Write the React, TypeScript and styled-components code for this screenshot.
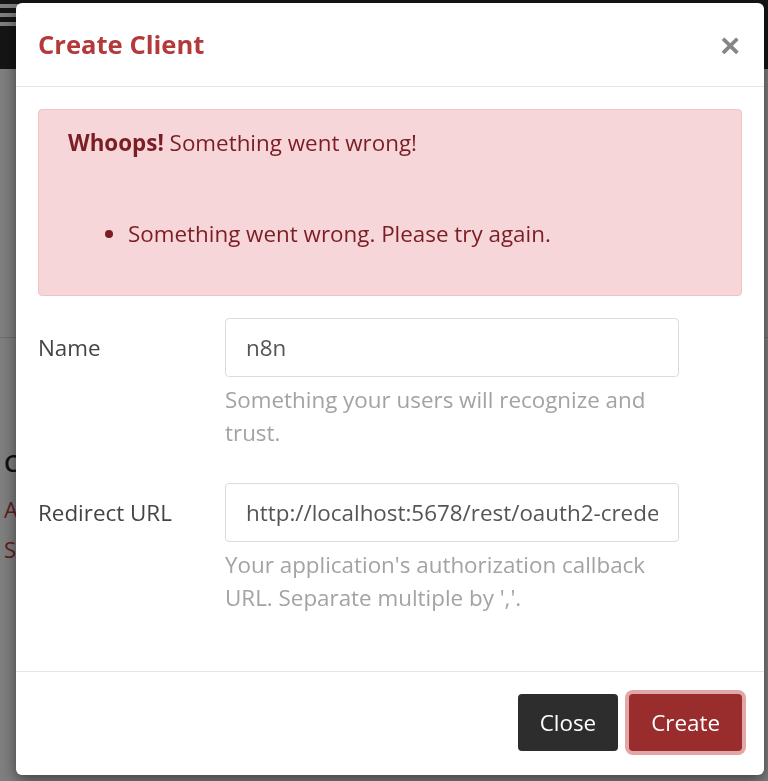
import styled, { createGlobalStyle } from "styled-components";

const GlobalStyle = createGlobalStyle`
    html, body {
        margin: 0;
        padding: 0;
    }
    body {
        font-family: "Open Sans", "Liberation Sans", sans-serif;
        background: #ffffff;
        color: #222;
    }
    * {
        box-sizing: border-box;
    }
`;

const Page = styled.div`
    width: 100%;
    min-height: 781px;
    display: flex;
    flex-direction: column;
`;

const NavBar = styled.div`
    height: 69px;
    background: #2a2a2a;
    display: flex;
    flex-direction: column;
    gap: 5px;
    padding: 4px 0 0 0;
`;

const MenuBar = styled.span`
    display: block;
    width: 30px;
    height: 4px;
    background: #ffffff;
`;

const PageContent = styled.div`
    padding: 0 4px;
    display: flex;
    flex-direction: column;
`;

const Divider = styled.hr`
    border: 0;
    border-top: 1px solid #dcdcdc;
    margin: 268px -4px 0 -4px;
`;

const PageHeading = styled.h3`
    font-size: 24px;
    font-weight: 600;
    margin: 108px 0 10px 0;
    color: #222;
`;

const PageLink = styled.a`
    font-size: 22px;
    line-height: 40px;
    color: #c23b3b;
    text-decoration: none;
`;

const Overlay = styled.div`
    position: fixed;
    inset: 0;
    background: rgba(0, 0, 0, 0.5);
    display: flex;
    align-items: flex-start;
    padding: 3px 4px 0 16px;
`;

const Dialog = styled.div`
    width: 748px;
    background: #ffffff;
    border-radius: 6px;
    box-shadow: 0 5px 15px rgba(0, 0, 0, 0.5);
    display: flex;
    flex-direction: column;
`;

const Header = styled.div`
    height: 84px;
    display: flex;
    align-items: center;
    justify-content: space-between;
    padding: 0 24px 0 22px;
    border-bottom: 1px solid #e5e5e5;
`;

const Title = styled.h4`
    margin: 0;
    font-size: 25.6px;
    font-weight: 700;
    color: #b3393a;
`;

const CloseX = styled.button`
    border: 0;
    background: none;
    padding: 0;
    font-family: "Liberation Sans", Arial, sans-serif;
    font-size: 34px;
    font-weight: 700;
    line-height: 1;
    color: #858585;
    cursor: pointer;
`;

const Body = styled.div`
    padding: 22px 22px 57px 22px;
    display: flex;
    flex-direction: column;
`;

const Alert = styled.div`
    background: #f7d6d9;
    border: 1px solid #f2c2c6;
    border-radius: 4px;
    padding: 17px 29px 18px 29px;
    color: #7a1d24;
    font-size: 22.4px;
    line-height: 32px;
`;

const AlertLead = styled.p`
    margin: 0 0 59px 0;
`;

const AlertList = styled.ul`
    margin: 0 0 27px 0;
    padding-left: 60px;
`;

const FormRow = styled.div<{ $top: number }>`
    display: grid;
    grid-template-columns: 187px 454px;
    margin-top: ${(p) => p.$top}px;
`;

const Label = styled.label`
    font-size: 22.4px;
    line-height: 32px;
    color: #444;
    padding-top: 14px;
`;

const Field = styled.div`
    display: flex;
    flex-direction: column;
`;

const Input = styled.input`
    width: 100%;
    height: 59px;
    border: 1px solid #dcdcdc;
    border-radius: 4px;
    padding: 0 20px;
    font-family: inherit;
    font-size: 22.4px;
    color: #555;
    outline: none;
`;

const Help = styled.span`
    display: block;
    margin-top: 7px;
    font-size: 22.4px;
    line-height: 32.5px;
    color: #a3a3a3;
`;

const Footer = styled.div`
    border-top: 1px solid #e5e5e5;
    padding: 22px 22px 24px 22px;
    display: flex;
    justify-content: flex-end;
    gap: 11px;
`;

const Button = styled.button<{ $primary?: boolean }>`
    height: 57px;
    padding: 0 22px;
    border: 0;
    border-radius: 4px;
    font-family: inherit;
    font-size: 22.4px;
    color: #ffffff;
    background: ${(p) => (p.$primary ? "#992c2c" : "#2d2d2d")};
    box-shadow: ${(p) => (p.$primary ? "0 0 0 4px #e3a6a6" : "none")};
    cursor: pointer;
`;

export default function App() {
    return (
        <>
            <GlobalStyle />
            <Page>
                <NavBar>
                    <MenuBar />
                    <MenuBar />
                    <MenuBar />
                </NavBar>
                <PageContent>
                    <Divider />
                    <PageHeading>Clients</PageHeading>
                    <PageLink href="#">Add Client</PageLink>
                    <PageLink href="#">Settings</PageLink>
                </PageContent>
            </Page>
            <Overlay>
                <Dialog role="dialog">
                    <Header>
                        <Title>Create Client</Title>
                        <CloseX aria-label="Close">×</CloseX>
                    </Header>
                    <Body>
                        <Alert>
                            <AlertLead>
                                <strong>Whoops!</strong> Something went wrong!
                            </AlertLead>
                            <AlertList>
                                <li>Something went wrong. Please try again.</li>
                            </AlertList>
                        </Alert>
                        <FormRow $top={22}>
                            <Label>Name</Label>
                            <Field>
                                <Input defaultValue="n8n" />
                                <Help>Something your users will recognize and trust.</Help>
                            </Field>
                        </FormRow>
                        <FormRow $top={34}>
                            <Label>Redirect URL</Label>
                            <Field>
                                <Input defaultValue="http://localhost:5678/rest/oauth2-credential/callback" />
                                <Help>Your application's authorization callback URL. Separate multiple by ','.</Help>
                            </Field>
                        </FormRow>
                    </Body>
                    <Footer>
                        <Button>Close</Button>
                        <Button $primary>Create</Button>
                    </Footer>
                </Dialog>
            </Overlay>
        </>
    );
}
